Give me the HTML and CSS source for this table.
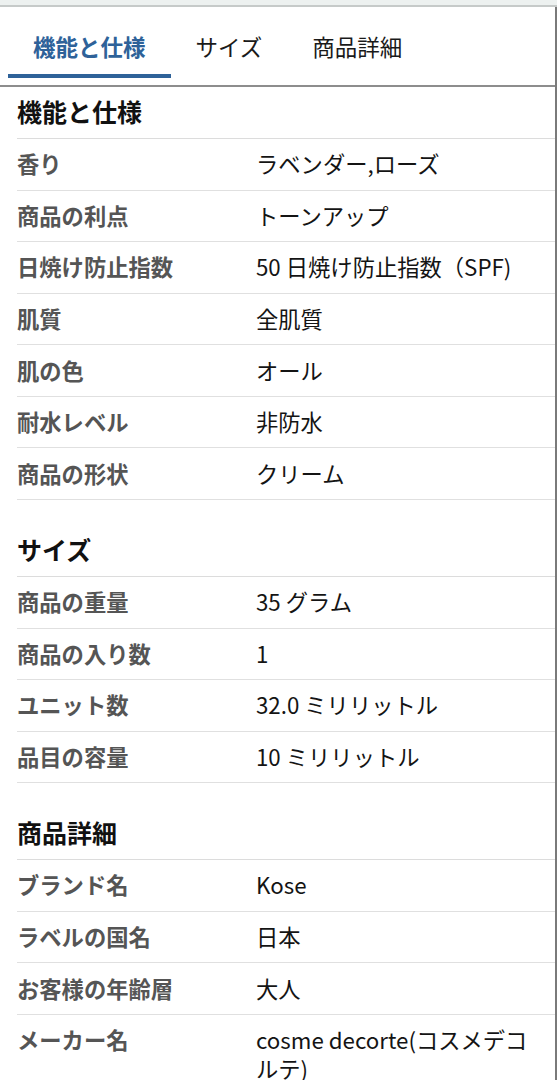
FILE: index.html
```html
<!DOCTYPE html>
<html lang="ja">
<head>
<meta charset="utf-8">
<link rel="stylesheet" href="styles.css">
</head>
<body>
<div class="topbar"></div>
<div class="page">
  <nav class="tabs">
    <div class="tab active">機能と仕様</div>
    <div class="tab">サイズ</div>
    <div class="tab">商品詳細</div>
  </nav>
  <div class="content">
    <section class="section first">
      <h2 class="section-title">機能と仕様</h2>
      <div class="row"><div class="label">香り</div><div class="value">ラベンダー,ローズ</div></div>
      <div class="row"><div class="label">商品の利点</div><div class="value">トーンアップ</div></div>
      <div class="row"><div class="label">日焼け防止指数</div><div class="value">50 日焼け防止指数（SPF)</div></div>
      <div class="row"><div class="label">肌質</div><div class="value">全肌質</div></div>
      <div class="row"><div class="label">肌の色</div><div class="value">オール</div></div>
      <div class="row"><div class="label">耐水レベル</div><div class="value">非防水</div></div>
      <div class="row"><div class="label">商品の形状</div><div class="value">クリーム</div></div>
    </section>
    <section class="section">
      <h2 class="section-title">サイズ</h2>
      <div class="row"><div class="label">商品の重量</div><div class="value">35 グラム</div></div>
      <div class="row"><div class="label">商品の入り数</div><div class="value">1</div></div>
      <div class="row"><div class="label">ユニット数</div><div class="value">32.0 ミリリットル</div></div>
      <div class="row"><div class="label">品目の容量</div><div class="value">10 ミリリットル</div></div>
    </section>
    <section class="section">
      <h2 class="section-title">商品詳細</h2>
      <div class="row"><div class="label">ブランド名</div><div class="value">Kose</div></div>
      <div class="row"><div class="label">ラベルの国名</div><div class="value">日本</div></div>
      <div class="row"><div class="label">お客様の年齢層</div><div class="value">大人</div></div>
      <div class="row"><div class="label">メーカー名</div><div class="value">cosme decorte(コスメデコルテ)</div></div>
    </section>
  </div>
</div>
</body>
</html>
```
FILE: styles.css
```css
html, body {
  margin: 0;
  padding: 0;
  background: #ffffff;
}
body {
  font-family: "Noto Sans CJK JP", "Noto Sans", sans-serif;
  color: #111111;
  width: 557px;
  overflow: hidden;
}
.topbar {
  height: 5px;
  background: #edf1f0;
  border-bottom: 2px solid #c6cac9;
}
.page {
  border-right: 2px solid #7a7a7a;
  min-height: 1080px;
}
.tabs {
  display: flex;
  padding-left: 8px;
  padding-bottom: 7px;
  border-bottom: 2px solid #8d8d8d;
}
.tab {
  font-size: 22.5px;
  line-height: 32px;
  padding: 23px 25px 12px;
  border-bottom: 4px solid transparent;
  color: #1a1a1a;
}
.tab.active {
  color: #2e6299;
  font-weight: 700;
  border-bottom-color: #2e6299;
}
.content {
  margin-left: 17px;
}
.section {
  margin-top: 25px;
}
.section.first {
  margin-top: 0;
}
.section-title {
  margin: 0;
  font-size: 25px;
  font-weight: 700;
  line-height: 32px;
  padding: 8px 0 11px;
  border-bottom: 1px solid #dcdcdc;
  color: #111111;
}
.row {
  display: grid;
  grid-template-columns: 239px 1fr;
  font-size: 22.3px;
  line-height: 29px;
  padding: 10.3px 18px 11.27px 0;
  border-bottom: 1px solid #e0e0e0;
}
.label {
  font-weight: 700;
  color: #555555;
}
.value {
  color: #141414;
}
```
